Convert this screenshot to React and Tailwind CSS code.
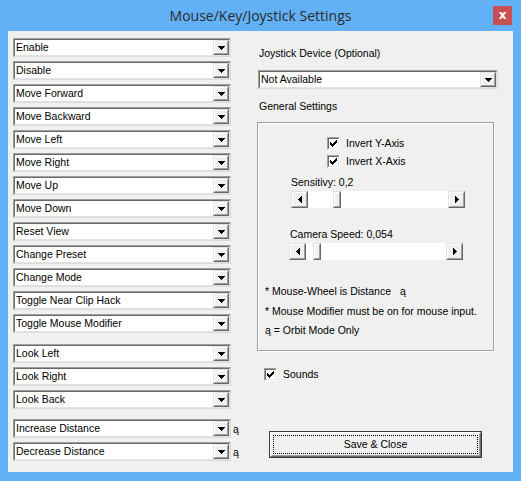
import React from "react";

const leftTop = [
  "Enable",
  "Disable",
  "Move Forward",
  "Move Backward",
  "Move Left",
  "Move Right",
  "Move Up",
  "Move Down",
  "Reset View",
  "Change Preset",
  "Change Mode",
  "Toggle Near Clip Hack",
  "Toggle Mouse Modifier",
];
const leftLook = ["Look Left", "Look Right", "Look Back"];
const leftDist = ["Increase Distance", "Decrease Distance"];

const Raised = ({ className = "", children }) => (
  <div className={`flex border border-t-[#e3e3e3] border-l-[#e3e3e3] border-b-[#696969] border-r-[#696969] ${className}`}>
    <div className="flex flex-1 items-center justify-center border border-t-white border-l-white border-b-[#a0a0a0] border-r-[#a0a0a0] bg-[#f0f0f0]">
      {children}
    </div>
  </div>
);

const Arrow = ({ dir }) => {
  const paths = {
    down: "M0 0h7v1H0zM1 1h5v1H1zM2 2h3v1H2zM3 3h1v1H3z",
    left: "M3 0h1v7H3zM2 1h1v5H2zM1 2h1v3H1zM0 3h1v1H0z",
    right: "M0 0h1v7H0zM1 1h1v5H1zM2 2h1v3H2zM3 3h1v1H3z",
  };
  const w = dir === "down" ? 7 : 4;
  const h = dir === "down" ? 4 : 7;
  return (
    <svg width={w} height={h} viewBox={`0 0 ${w} ${h}`} shapeRendering="crispEdges">
      <path d={paths[dir]} fill="#000" />
    </svg>
  );
};

const Combo = ({ label, className = "" }) => (
  <div className={`flex h-[19px] border border-t-[#a0a0a0] border-l-[#a0a0a0] border-b-[#dcdcdc] border-r-[#dcdcdc] ${className}`}>
    <div className="flex flex-1 border border-t-[#696969] border-l-[#696969] border-b-[#e3e3e3] border-r-[#e3e3e3] bg-white">
      <div className="flex-1 truncate pl-[1px] leading-[15px] text-black">{label}</div>
      <Raised className="w-[16px]">
        <Arrow dir="down" />
      </Raised>
    </div>
  </div>
);

const Check = ({ className = "" }) => (
  <div className={`flex h-[13px] w-[13px] border border-t-[#a0a0a0] border-l-[#a0a0a0] border-b-white border-r-white ${className}`}>
    <div className="flex flex-1 items-center justify-center border border-t-[#696969] border-l-[#696969] border-b-[#e3e3e3] border-r-[#e3e3e3] bg-white">
      <svg width="7" height="7" viewBox="0 0 7 7" shapeRendering="crispEdges">
        <path d="M6 0h1v3H6zM5 1h1v3H5zM4 2h1v3H4zM0 2h1v3H0zM1 3h1v3H1zM3 3h1v3H3zM2 4h1v3H2z" fill="#000" />
      </svg>
    </div>
  </div>
);

const Scroll = ({ offset, className = "" }) => (
  <div className={`flex h-[17px] w-[174px] ${className}`}>
    <Raised className="w-[17px]">
      <Arrow dir="left" />
    </Raised>
    <div className="flex flex-1 bg-white">
      <div style={{ width: offset }} />
      <Raised className="w-[8px]" />
    </div>
    <Raised className="w-[17px]">
      <Arrow dir="right" />
    </Raised>
  </div>
);

export default function App() {
  return (
    <div className="flex h-[481px] w-[521px] flex-col bg-[#62b1f6] font-['Liberation_Sans',Arial,sans-serif] text-[10.5px] text-black">
      <div className="grid h-[31px] grid-cols-[1fr_auto_1fr] items-center">
        <div />
        <div className="pb-[1px] font-['Open_Sans',sans-serif] text-[14px] text-[#2b2b2b]">Mouse/Key/Joystick Settings</div>
        <div className="flex justify-end pr-[9px]">
          <div className="flex h-[19px] w-[19px] items-center justify-center bg-[#c75050] pb-[2px] font-['DejaVu_Sans',sans-serif] text-[12px] font-bold text-white">
            x
          </div>
        </div>
      </div>

      <div className="mx-[8px] flex h-[441px] bg-[#f0f0f0]">
        <div className="flex w-[249px] flex-col pl-[5px] pt-[7px]">
          <div className="flex flex-col gap-[4px]">
            {leftTop.map((l) => (
              <Combo key={l} label={l} className="w-[218px]" />
            ))}
          </div>
          <div className="mt-[11px] flex flex-col gap-[4px]">
            {leftLook.map((l) => (
              <Combo key={l} label={l} className="w-[218px]" />
            ))}
          </div>
          <div className="mt-[10px] flex flex-col gap-[4px]">
            {leftDist.map((l) => (
              <div key={l} className="flex items-center">
                <Combo label={l} className="w-[218px]" />
                <span className="ml-[2px] pt-[3px]">ą</span>
              </div>
            ))}
          </div>
        </div>

        <div className="flex w-[241px] flex-col pt-[16px]">
          <div className="pl-[2px] leading-[13px]">Joystick Device (Optional)</div>
          <Combo label="Not Available" className="ml-[1px] mt-[10px] w-[240px]" />
          <div className="mt-[11px] pl-[2px] leading-[13px]">General Settings</div>

          <div className="mt-[9px] flex h-[229px] w-[237px] flex-col border border-[#a0a0a0] pt-[14px] shadow-[inset_1px_1px_0_#fff,1px_1px_0_#fff]">
            <div className="ml-[69px] flex h-[13px] items-center gap-[6px]">
              <Check />
              <span className="leading-[13px]">Invert Y-Axis</span>
            </div>
            <div className="ml-[69px] mt-[5px] flex h-[13px] items-center gap-[6px]">
              <Check />
              <span className="leading-[13px]">Invert X-Axis</span>
            </div>
            <div className="ml-[33px] mt-[8px] leading-[13px]">Sensitivy: 0,2</div>
            <Scroll offset={25} className="ml-[33px] mt-[2px]" />
            <div className="ml-[32px] mt-[20px] leading-[13px]">Camera Speed: 0,054</div>
            <Scroll offset={7} className="ml-[31px] mt-[2px]" />
            <div className="ml-[7px] mt-[25px] leading-[13px]">
              * Mouse-Wheel is Distance<span className="ml-[9px]">ą</span>
            </div>
            <div className="ml-[7px] mt-[7px] leading-[13px]">* Mouse Modifier must be on for mouse input.</div>
            <div className="ml-[7px] mt-[6px] leading-[13px]">ą = Orbit Mode Only</div>
          </div>

          <div className="ml-[7px] mt-[17px] flex h-[13px] items-center gap-[6px]">
            <Check />
            <span className="leading-[13px]">Sounds</span>
          </div>

          <div className="ml-[12px] mt-[50px] flex h-[27px] w-[213px] border border-[#3c3c3c]">
            <div className="flex flex-1 border border-t-white border-l-white border-b-[#696969] border-r-[#696969]">
              <div className="flex flex-1 border border-t-[#f0f0f0] border-l-[#f0f0f0] border-b-[#a0a0a0] border-r-[#a0a0a0] bg-[#f0f0f0] p-[1px]">
                <div className="flex flex-1 items-center justify-center border border-dotted border-black leading-[13px]">
                  Save &amp; Close
                </div>
              </div>
            </div>
          </div>
        </div>
      </div>
    </div>
  );
}
